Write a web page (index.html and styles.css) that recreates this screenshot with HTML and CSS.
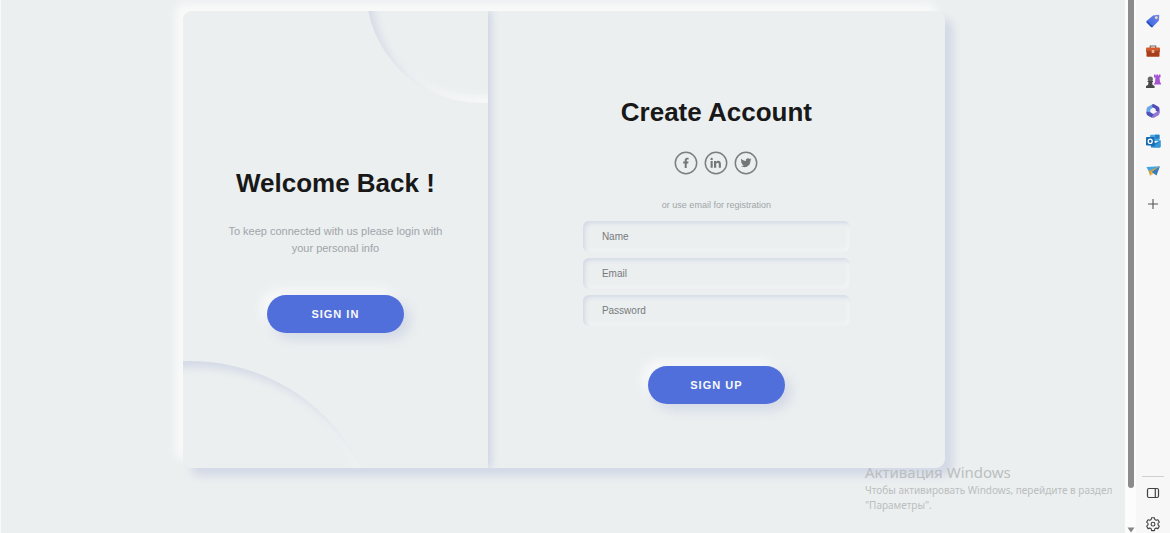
FILE: index.html
```
<!DOCTYPE html>
<html lang="en">
<head>
<meta charset="utf-8">
<title>Create Account</title>
<link rel="stylesheet" href="styles.css">
</head>
<body>
<div class="window">
  <main class="page">
    <div class="card">
      <section class="welcome">
        <div class="circles">
          <span class="circle circle-bottom"></span>
          <span class="circle circle-top"></span>
        </div>
        <h2 class="title">Welcome Back !</h2>
        <p class="description">To keep connected with us please login with your personal info</p>
        <button class="button" type="button">SIGN IN</button>
      </section>
      <form class="register">
        <h2 class="title">Create Account</h2>
        <div class="socials">
          <a class="social" href="#" aria-label="Facebook"><svg viewBox="0 0 24 24"><circle cx="12" cy="12" r="10.7"/><path d="M10.7 17v-4.6H9.2v-1.9h1.5V9.2c0-1.6.9-2.5 2.4-2.5l1.5.1v1.8h-.9c-.8 0-1 .4-1 1v.9h1.8l-.3 1.9h-1.5V17z"/></svg></a>
          <a class="social" href="#" aria-label="LinkedIn"><svg viewBox="0 0 24 24"><circle cx="12" cy="12" r="10.7"/><path d="M6.600 10h2.100v6.700H6.600zM7.650 6.700a1.200 1.200 0 1 1 0 2.400 1.200 1.200 0 0 1 0-2.400zM10 10h2v.900c.4-.7 1.100-1.100 2.100-1.100 2.100 0 2.800 1.300 2.800 3.300v3.600h-2.100v-3.300c0-.9-.2-1.700-1.200-1.700-1.100 0-1.400.8-1.400 1.700v3.300H10z"/></svg></a>
          <a class="social" href="#" aria-label="Twitter"><svg viewBox="0 0 24 24"><circle cx="12" cy="12" r="10.7"/><path d="M17.4 8.400l-1.200.4c.4-.3.7-.7.9-1.200l-1.400.5a2.200 2.200 0 0 0-3.800 2c-1.900-.1-3.500-1-4.600-2.300-.6 1-.3 2.300.7 3l-1-.3c0 1.100.8 2 1.800 2.200h-1c.3.9 1.100 1.500 2.100 1.500-1 .8-2 1-3.200.9 4.600 2.800 10 .2 9.700-5.500.4-.3.8-.7 1-1.200z"/></svg></a>
        </div>
        <p class="hint">or use email for registration</p>
        <div class="fields">
          <input class="field" type="text" placeholder="Name" aria-label="Name">
          <input class="field" type="email" placeholder="Email" aria-label="Email">
          <input class="field" type="password" placeholder="Password" aria-label="Password">
        </div>
        <button class="button" type="button">SIGN UP</button>
      </form>
    </div>
    <aside class="activation">
      <p class="activation-title">Активация Windows</p>
      <p class="activation-text">Чтобы активировать Windows, перейдите в раздел "Параметры".</p>
    </aside>
  </main>
  <div class="scrollbar">
    <span class="thumb"></span>
    <svg class="arrow" viewBox="0 0 8 6"><path d="M.5.5h7L4 5.500z" fill="#858585"/></svg>
  </div>
  <nav class="sidebar" aria-label="Browser sidebar">
    <div class="tools">
      <button class="tool" type="button" aria-label="Shopping"><svg viewBox="0 0 16 16"><defs><linearGradient id="tag" x1="0" y1="1" x2="1" y2="0"><stop stop-color="#3460dc"/><stop offset="1" stop-color="#7189ef"/></linearGradient></defs><path d="M8 2.500l5.300-.8q1 0 1 1l-.5 5-6 6q-1 .9-2 0l-4-4q-.9-1 0-2z" fill="url(#tag)"/><path d="M1.300 9l5.200 5.200q.7.200 1.500-.5l-5.500-5.500z" fill="#2547b5"/><circle cx="11.300" cy="4.700" r="1.400" fill="#f5dda5"/></svg></button>
      <button class="tool" type="button" aria-label="Tools"><svg viewBox="0 0 16 16"><path d="M5.300 5V3h5.400v2" fill="none" stroke="#6b6865" stroke-width="1.200"/><path d="M2 4.500h12q1 0 1 1v3H1v-3q0-1 1-1z" fill="#d45b2c"/><path d="M1.500 8.500h13V13q0 .8-.8.8H2.300q-.8 0-.8-.8z" fill="#a93c19"/><path d="M1 8.300h14" stroke="#7e2c14" stroke-width=".7"/><path d="M6.700 7h2.600v3H6.700z" fill="#eab394"/></svg></button>
      <button class="tool" type="button" aria-label="Games"><svg viewBox="0 0 16 16"><path d="M9 1.500h1.500v1h1v-1h1.500v1h1v-1h1.500v3h-1l.5 4.500 1 1.500v1H8.500l1.500-2 .5-5H9z" fill="#a552d5"/><circle cx="5.300" cy="6" r="2.600" fill="#666"/><path d="M2.600 8h5.400v1l-.9.500.5 2.500 2 1v2H1v-2l2-1 .6-2.500-1-.5z" fill="#484848"/></svg></button>
      <button class="tool" type="button" aria-label="Microsoft 365"><svg viewBox="0 0 16 16"><path d="M7.500 1.200L3 3.700Q1.500 4.600 1.500 6.300v3.800l3.800 1V6.500L10.500 3z" fill="#6ca5e5"/><path d="M7.500 1.200q1-.4 2 .2L13 3.500q1.500.8 1.500 2.500v4l-3.800-2.300V5.900L7 3.800z" fill="#5549b5"/><path d="M14.500 8v2q0 1.700-1.400 2.500l-3.600 2q-1.500.8-3 0l-3.600-2q-1.400-.9-1.400-2.500l3.800-.9L8 11l4-2.300z" fill="#9878d7"/><path d="M1.500 8.500v1.600q0 1.600 1.400 2.400l3.600 2 2.400-3.200L8 11 5.300 9.500z" fill="#4955b6"/></svg></button>
      <button class="tool" type="button" aria-label="Outlook"><svg viewBox="0 0 16 16"><path d="M6 1.700h7.500q1 0 1 1V8H5V2.700q0-1 1-1z" fill="#45a8e5"/><path d="M10 1.700h4.500v4H10z" fill="#277fc5"/><path d="M5 7l5.500 3L15.500 7v6.500q0 1-1 1H6z" fill="#237fca"/><path d="M15.500 7.500L8 14.500h6.500q1 0 1-1z" fill="#3198da"/><rect x="1" y="4" width="8.500" height="8.500" rx="1" fill="#1669ae"/><ellipse cx="5.200" cy="8.250" rx="2" ry="2.200" fill="none" stroke="#fff" stroke-width="1.300"/></svg></button>
      <button class="tool" type="button" aria-label="Drop"><svg viewBox="0 0 16 16"><path d="M1.500 4l13.500-.7-7.500 5.200-4-.5z" fill="#43a5e6"/><path d="M3.500 8L15 3.300 6.500 9.500 5 13z" fill="#d5a43e"/><path d="M6.500 9L15 3.300l-3.500 9.200z" fill="#357bbd"/><path d="M6.500 9L5 13l3.500-2.500z" fill="#e2b851"/></svg></button>
      <button class="tool" type="button" aria-label="Customize"><svg viewBox="0 0 16 16" fill="none" stroke="#555" stroke-width="1.100"><path d="M8 3v10M3 8h10"/></svg></button>
    </div>
    <div class="tools tools-bottom">
      <button class="tool" type="button" aria-label="Hide sidebar"><svg viewBox="0 0 16 16" fill="none" stroke="#424242" stroke-width="1.200"><rect x="2.500" y="3.500" width="11" height="9" rx="1.500"/><path d="M10.300 3.500v9"/></svg></button>
      <button class="tool" type="button" aria-label="Settings"><svg viewBox="0 0 16 16" fill="none" stroke="#424242" stroke-width="1.100" stroke-linejoin="round"><path d="M6.600 1.700h2.800l.4 1.800 1.300.7 1.800-.5 1.400 2.400-1.300 1.300v1.500l1.300 1.300-1.400 2.400-1.800-.5-1.300.7-.4 1.800H6.600l-.4-1.800-1.300-.7-1.800.5-1.400-2.400L3 8.900V7.400L1.700 6.100l1.400-2.400 1.800.5 1.300-.7z"/><circle cx="8" cy="8.150" r="1.900"/></svg></button>
    </div>
  </nav>
</div>
</body>
</html>
```
FILE: styles.css
```
* { box-sizing: border-box; }

body {
  margin: 0;
  background: #ebeff0;
  font-family: "Liberation Sans", Arial, sans-serif;
}

p, h2 { margin: 0; }

.window {
  display: grid;
  grid-template-columns: 1fr 11px 34px;
  min-height: 100vh;
}

.page {
  position: relative;
  display: flex;
  justify-content: center;
  align-items: flex-start;
  padding: 11px 0 64px 2px;
  border-left: 1px solid #f8f9f9;
  overflow: hidden;
}

.card {
  display: grid;
  grid-template-columns: 2fr 3fr;
  width: 100%;
  max-width: 762px;
  min-height: 457px;
  border-radius: 9px;
  overflow: hidden;
  background: #ebeff0;
  box-shadow: 8px 8px 8px #d3d9e6, -8px -8px 8px #f9f9f9;
}

.welcome {
  position: relative;
  display: flex;
  flex-direction: column;
  align-items: center;
  justify-content: center;
  padding: 21px 38px 0;
  box-shadow: 3px 0 8px #ccd3e2;
}

.circles {
  position: absolute;
  inset: 0;
  overflow: hidden;
  background: #ebeff0;
}

.title, .description, .button { position: relative; }

.circle {
  position: absolute;
  border-radius: 50%;
  box-shadow: inset 6px 6px 9px #d3d9e6, inset -6px -6px 9px #f9f9f9;
}

.circle-bottom {
  width: 381px;
  height: 381px;
  bottom: -60%;
  left: -60%;
}

.circle-top {
  width: 229px;
  height: 229px;
  top: -30%;
  left: 60%;
}

.title {
  color: #181818;
  font-size: 26px;
  line-height: 30px;
}

.description {
  margin-top: 25px;
  color: #a0a5a8;
  font-size: 11px;
  line-height: 17px;
  text-align: center;
}

.button {
  width: 137px;
  height: 38px;
  margin-top: 38px;
  padding: 0;
  border: 0;
  border-radius: 19px;
  background: #516fda;
  box-shadow: 6px 6px 12px #d3d9e6, -6px -6px 12px #f9f9f9;
  color: #f9f9f9;
  font: bold 11px "Liberation Sans", Arial, sans-serif;
  letter-spacing: 1px;
}

.register {
  display: flex;
  flex-direction: column;
  align-items: center;
  justify-content: center;
  padding-top: 22px;
}

.socials {
  display: flex;
  gap: 6px;
  margin-top: 24px;
}

.social {
  width: 24px;
  height: 24px;
}

.social svg { display: block; }
.social circle { fill: none; stroke: #7c7f80; stroke-width: 1.5px; }
.social path { fill: #747778; }

.hint {
  margin-top: 23px;
  color: #a0a5a8;
  font-size: 9px;
  line-height: 14px;
}

.fields {
  display: grid;
  gap: 6px;
  width: 100%;
  max-width: 267px;
  margin-top: 9px;
}

.field {
  width: 100%;
  height: 31px;
  padding: 0 19px;
  border: 0;
  border-radius: 6px;
  background: #ebeff0;
  box-shadow: inset 2px 2px 4px #d3d9e6, inset -2px -2px 4px #f5f6f7;
  color: #555;
  font: 10px "Liberation Sans", Arial, sans-serif;
}

.field::placeholder { color: #777a7b; }

.fields + .button { margin-top: 40px; }

.activation {
  position: absolute;
  right: 0;
  bottom: 20px;
  width: 260px;
  color: #bbbebf;
  font-family: "Noto Sans", "Open Sans", sans-serif;
}

.activation-title {
  font-size: 15px;
  line-height: 22px;
}

.activation-text {
  font-size: 10px;
  line-height: 15px;
}

.scrollbar {
  display: flex;
  flex-direction: column;
  align-items: center;
  background: #fcfcfc;
}

.thumb {
  flex: 1;
  width: 6px;
  margin-bottom: 39px;
  border-radius: 0 0 3px 3px;
  background: #8b8b8b;
}

.arrow {
  width: 8px;
  height: 6px;
}

.sidebar {
  display: flex;
  flex-direction: column;
  align-items: center;
  justify-content: space-between;
  padding: 13px 0 1px;
  background: #f7f7f7;
}

.tools {
  display: grid;
  justify-items: center;
  gap: 14px;
}

.tool {
  width: 16px;
  height: 16px;
  padding: 0;
  border: 0;
  background: none;
}

.tool svg { display: block; }
.tool:last-child { margin-top: 3px; }

.tools-bottom {
  gap: 12px;
  width: 22px;
  padding-top: 8px;
  border-top: 1px solid #d0d0d0;
}
```
